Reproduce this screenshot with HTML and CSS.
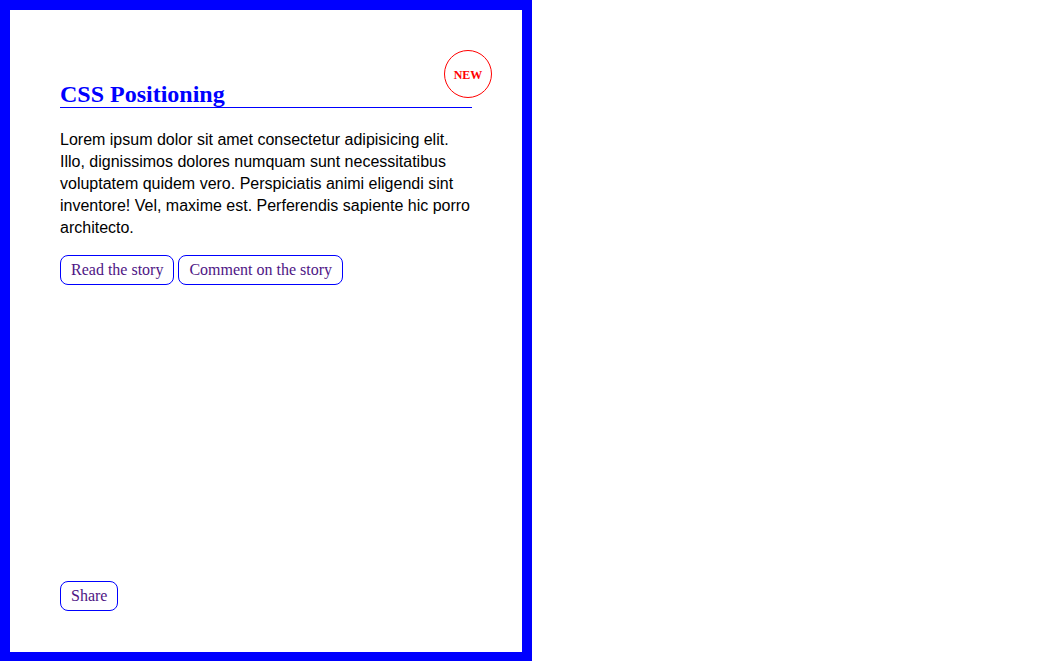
FILE: index.html
```html
<!DOCTYPE html>
<html lang="en">
<head>
<meta charset="utf-8">
<title>CSS Positioning</title>
<link rel="stylesheet" href="styles.css">
</head>
<body>
<article class="card">
  <span class="badge">NEW</span>
  <h2 class="card-title">CSS Positioning</h2>
  <p class="card-text">Lorem ipsum dolor sit amet consectetur adipisicing elit. Illo, dignissimos dolores numquam sunt necessitatibus voluptatem quidem vero. Perspiciatis animi eligendi sint inventore! Vel, maxime est. Perferendis sapiente hic porro architecto.</p>
  <div class="actions">
    <a class="btn" href="#">Read the story</a>
    <a class="btn" href="#">Comment on the story</a>
  </div>
  <div class="footer">
    <a class="btn" href="#">Share</a>
  </div>
</article>
</body>
</html>
```

FILE: styles.css
```css
html, body {
  margin: 0;
  padding: 0;
  background: #ffffff;
}

body {
  font-family: "Liberation Serif", "Times New Roman", serif;
}

.card {
  position: relative;
  box-sizing: border-box;
  width: 532px;
  height: 662px;
  border: 10px solid #0000ff;
  padding: 51px 50px 41px;
  display: flex;
  flex-direction: column;
  background: #ffffff;
}

.badge {
  position: absolute;
  top: 40px;
  right: 30px;
  box-sizing: border-box;
  width: 48px;
  height: 48px;
  padding-top: 2px;
  border: 1px solid #ff0000;
  border-radius: 50%;
  display: flex;
  align-items: center;
  justify-content: center;
  color: #ff0000;
  font-family: "Liberation Serif", "Times New Roman", serif;
  font-weight: bold;
  font-size: 12px;
}

.card-title {
  margin: 20px 0 21px;
  font-family: "Liberation Serif", "Times New Roman", serif;
  font-size: 24px;
  font-weight: bold;
  color: #0000ff;
  border-bottom: 1px solid #0000ff;
  line-height: 26px;
}

.card-text {
  margin: 0 0 16px;
  font-family: "Liberation Sans", Arial, sans-serif;
  font-size: 16px;
  line-height: 22px;
  color: #000000;
}

.actions {
  display: flex;
  gap: 4px;
}

.footer {
  margin-top: auto;
  display: flex;
}

.btn {
  display: inline-block;
  box-sizing: border-box;
  height: 30px;
  line-height: 28px;
  padding: 0 10px;
  border: 1px solid #0000ff;
  border-radius: 8px;
  font-family: "Liberation Serif", "Times New Roman", serif;
  font-size: 16px;
  color: #4e1585;
  text-decoration: none;
}
```
